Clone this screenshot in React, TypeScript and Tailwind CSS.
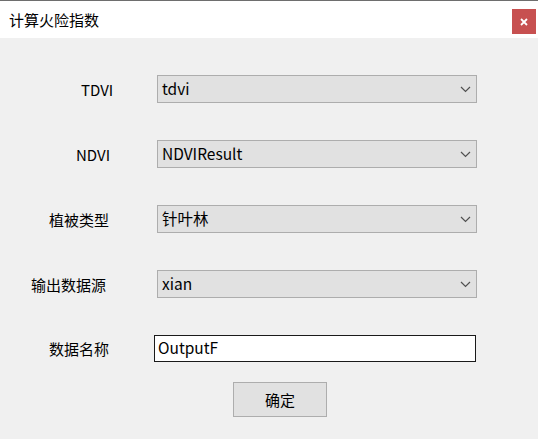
const font = "font-['Noto_Sans_CJK_SC','Noto_Sans',sans-serif]";

function Chevron() {
  return (
    <svg width="11" height="7" viewBox="0 0 11 7" className="shrink-0">
      <path d="M1 1 L5.5 5.5 L10 1" fill="none" stroke="#505050" strokeWidth="1.2" />
    </svg>
  );
}

function ComboRow({ label, value, pl }: { label: string; value: string; pl: string }) {
  return (
    <div className="flex items-center h-[28px]">
      <div className={`w-[157px] shrink-0 ${pl} text-[15px] leading-none text-black`}>{label}</div>
      <div className="w-[320px] h-[28px] flex items-center justify-between bg-[#e1e1e1] border border-[#adadad] pl-[4px] pr-[5px]">
        <span className="text-[15.5px] leading-none text-black">{value}</span>
        <Chevron />
      </div>
    </div>
  );
}

export default function App() {
  return (
    <div className={`w-[538px] h-[439px] flex flex-col bg-[#f0f0f0] ${font}`}>
      {/* title bar */}
      <div className="h-[1px] bg-[#6e6e6e]" />
      <div className="h-[37px] bg-white flex items-start justify-between">
        <div className="pl-[9px] pt-[11px] text-[15px] leading-none text-black">计算火险指数</div>
        <div className="mt-[8px] mr-[2px] w-[24px] h-[25px] bg-[#c75050] flex items-center justify-center">
          <svg width="8" height="8" viewBox="0 0 8 8">
            <path d="M1 1 L7 7 M7 1 L1 7" stroke="white" strokeWidth="1.8" />
          </svg>
        </div>
      </div>

      {/* form */}
      <div className="flex flex-col pt-[37px] gap-[37px]">
        <ComboRow label="TDVI" value="tdvi" pl="pl-[81px]" />
        <ComboRow label="NDVI" value="NDVIResult" pl="pl-[76px]" />
        <ComboRow label="植被类型" value="针叶林" pl="pl-[49px]" />
        <ComboRow label="输出数据源" value="xian" pl="pl-[31px]" />
        <div className="flex items-center h-[26px]">
          <div className="w-[154px] shrink-0 pl-[49px] text-[15px] leading-none text-black">数据名称</div>
          <div className="w-[322px] h-[27px] flex items-center bg-white border border-[#1a1a1a] pl-[3px] text-[15.5px] leading-none text-black">
            OutputF
          </div>
        </div>
      </div>

      <div className="flex justify-center pt-[21px] pl-[22px]">
        <div className="w-[94px] h-[35px] flex items-center justify-center bg-[#e1e1e1] border border-[#adadad] text-[15px] leading-none text-black">
          确定
        </div>
      </div>
    </div>
  );
}
